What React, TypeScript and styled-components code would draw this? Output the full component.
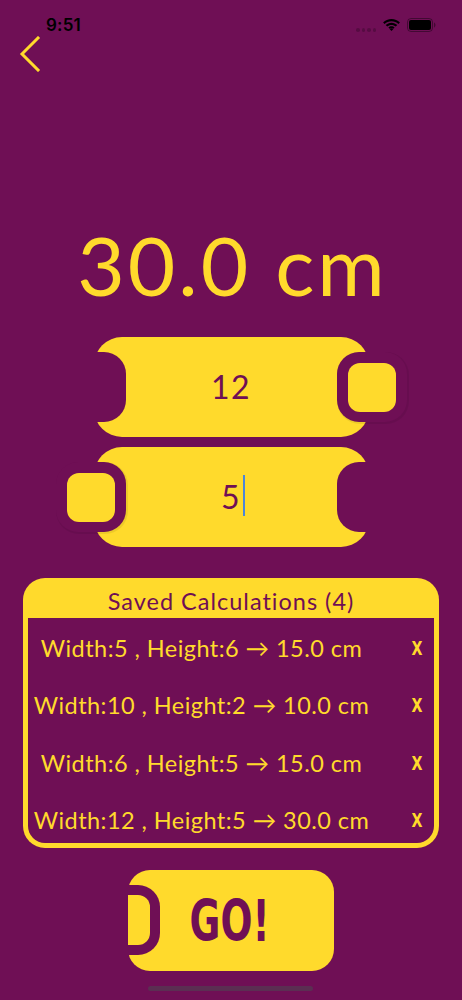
import React from "react";
import styled, { createGlobalStyle } from "styled-components";

const PURPLE = "#6f0f55";
const YELLOW = "#ffda2c";

const GlobalStyle = createGlobalStyle`
  html, body {
    margin: 0;
    padding: 0;
    background: ${PURPLE};
  }
  body {
    font-family: "Lato", "Open Sans", sans-serif;
  }
`;

const Screen = styled.div`
  position: relative;
  width: 462px;
  height: 1000px;
  overflow: hidden;
  background: ${PURPLE};
  display: flex;
  flex-direction: column;
  align-items: center;
`;

const StatusBar = styled.div`
  align-self: stretch;
  height: 37px;
  box-sizing: border-box;
  padding: 14px 26px 0 46px;
  display: flex;
  align-items: flex-start;
  justify-content: space-between;
`;

const Clock = styled.span`
  font-family: "Inter", "Roboto", sans-serif;
  font-weight: 600;
  font-size: 17px;
  line-height: 22px;
  color: #000;
  letter-spacing: 0.2px;
`;

const StatusIcons = styled.div`
  display: flex;
  align-items: center;
  gap: 6px;
  height: 22px;
`;

const Dots = styled.div`
  display: flex;
  gap: 2px;
  margin-top: 10px;
`;

const Dot = styled.span`
  width: 3.5px;
  height: 3.5px;
  border-radius: 50%;
  background: rgba(0, 0, 0, 0.22);
`;

const BackRow = styled.div`
  align-self: stretch;
  height: 33px;
  padding-left: 19px;
  display: flex;
  align-items: center;
`;

const Result = styled.div`
  margin-top: 154px;
  height: 80px;
  font-size: 82px;
  line-height: 80px;
  color: ${YELLOW};
  letter-spacing: 3px;
  margin-left: 3px;
`;

const Pill = styled.div<{ $top: number }>`
  position: relative;
  margin-top: ${(p) => p.$top}px;
  width: 275px;
  height: 100px;
  border-radius: 28px;
  background: ${YELLOW};
  display: flex;
  align-items: center;
  justify-content: center;
`;

const Notch = styled.div<{ $side: "left" | "right" }>`
  position: absolute;
  top: 15px;
  ${(p) => p.$side}: 0;
  width: 32px;
  height: 70px;
  background: ${PURPLE};
  border-radius: ${(p) => (p.$side === "left" ? "0 22px 22px 0" : "22px 0 0 22px")};
`;

const Knob = styled.div<{ $side: "left" | "right" }>`
  position: absolute;
  top: 15px;
  ${(p) => p.$side}: -38px;
  width: 70px;
  height: 70px;
  box-sizing: border-box;
  border-radius: 22px;
  background: ${PURPLE};
  box-shadow: 1px 1px 0 1px rgba(0, 0, 0, 0.07);
  display: flex;
  align-items: center;
  justify-content: center;
`;

const KnobFace = styled.div`
  width: 48px;
  height: 49px;
  border-radius: 12px;
  background: ${YELLOW};
`;

const FieldValue = styled.span`
  position: relative;
  font-size: 32px;
  line-height: 40px;
  color: ${PURPLE};
  letter-spacing: 1.5px;
`;

const Caret = styled.span`
  position: absolute;
  right: -4px;
  top: -2px;
  width: 2px;
  height: 41px;
  background: #4d86d9;
`;

const Saved = styled.div`
  margin-top: 31px;
  width: 416px;
  height: 270px;
  box-sizing: border-box;
  border-radius: 22px;
  background: ${YELLOW};
  padding: 0 5px 5px;
  display: flex;
  flex-direction: column;
`;

const SavedTitle = styled.div`
  height: 40px;
  padding-top: 6px;
  box-sizing: border-box;
  display: flex;
  align-items: center;
  justify-content: center;
  font-size: 23.5px;
  color: ${PURPLE};
  letter-spacing: 1px;
`;

const SavedList = styled.div`
  flex: 1;
  min-height: 0;
  background: ${PURPLE};
  border-radius: 0 0 17px 17px;
  padding-top: 1px;
  display: flex;
  flex-direction: column;
`;

const Row = styled.div`
  flex: none;
  height: 57.5px;
  display: flex;
  align-items: center;
  padding-right: 5px;
`;

const RowLabel = styled.span`
  flex: 1;
  text-align: center;
  font-size: 23.5px;
  color: ${YELLOW};
  letter-spacing: 0.45px;
  white-space: nowrap;
`;

const Remove = styled.span`
  width: 24px;
  margin-left: 30px;
  text-align: center;
  font-family: "DejaVu Sans", sans-serif;
  font-weight: 800;
  font-size: 19px;
  color: ${YELLOW};
  transform: scaleX(0.75);
`;

const GoButton = styled.div`
  position: relative;
  margin-top: 22px;
  width: 206px;
  height: 101px;
  border-radius: 22px;
  background: ${YELLOW};
  display: flex;
  align-items: center;
  justify-content: center;
`;

const GoNotch = styled.div`
  position: absolute;
  left: 0;
  top: 15px;
  width: 32px;
  height: 70px;
  box-sizing: border-box;
  border: 10px solid ${PURPLE};
  border-left: none;
  border-radius: 0 22px 22px 0;
  background: ${YELLOW};
`;

const GoLabel = styled.span`
  display: inline-block;
  font-family: "DejaVu Sans", sans-serif;
  font-weight: 800;
  font-size: 57px;
  line-height: 60px;
  color: ${PURPLE};
  transform: scaleX(0.66);
  margin-left: -2px;
`;

const HomeIndicator = styled.div`
  position: absolute;
  bottom: 9px;
  left: 148px;
  width: 165px;
  height: 5px;
  border-radius: 3px;
  background: #5b2e52;
`;

const saved = [
  { w: 5, h: 6, r: "15.0" },
  { w: 10, h: 2, r: "10.0" },
  { w: 6, h: 5, r: "15.0" },
  { w: 12, h: 5, r: "30.0" },
];

const Wifi = () => (
  <svg width="19" height="13" viewBox="0 0 19 13" style={{ marginTop: 1 }}>
    <path d="M9.5 2.2c2.7 0 5.1 1 6.9 2.7l1.5-1.5C15.7 1.3 12.8 0 9.5 0S3.3 1.3 1.1 3.4l1.5 1.5C4.4 3.2 6.8 2.2 9.5 2.2z" fill="#000" />
    <path d="M9.5 5.9c1.7 0 3.2.6 4.3 1.7l1.5-1.5C13.8 4.6 11.8 3.7 9.5 3.7S5.2 4.6 3.7 6.1l1.5 1.5c1.1-1.1 2.6-1.7 4.3-1.7z" fill="#000" />
    <path d="M9.5 9.3c.8 0 1.4.3 1.9.8L9.5 12 7.6 10.1c.5-.5 1.1-.8 1.9-.8z" fill="#000" />
    <path d="M9.5 7.3c1.2 0 2.3.5 3.1 1.2l-1.3 1.3c-.5-.4-1.1-.7-1.8-.7s-1.3.3-1.8.7L6.4 8.5c.8-.7 1.9-1.2 3.1-1.2z" fill="#000" />
  </svg>
);

const Battery = () => (
  <svg width="29" height="14" viewBox="0 0 29 14">
    <rect x="0.5" y="0.5" width="25" height="13" rx="3.5" fill="none" stroke="rgba(0,0,0,0.4)" />
    <rect x="2" y="2" width="22" height="10" rx="2" fill="#000" />
    <path d="M27 4.5v5c.9-.3 1.5-1.3 1.5-2.5s-.6-2.2-1.5-2.5z" fill="rgba(0,0,0,0.4)" />
  </svg>
);

const BackChevron = () => (
  <svg width="22" height="36" viewBox="0 0 22 36">
    <polyline points="19,2 3,18 19,34" fill="none" stroke={YELLOW} strokeWidth="3" strokeLinecap="square" />
  </svg>
);

const App: React.FC = () => {
  return (
    <>
      <GlobalStyle />
      <Screen>
        <StatusBar>
          <Clock>9:51</Clock>
          <StatusIcons>
            <Dots>
              <Dot />
              <Dot />
              <Dot />
              <Dot />
            </Dots>
            <Wifi />
            <Battery />
          </StatusIcons>
        </StatusBar>

        <BackRow>
          <BackChevron />
        </BackRow>

        <Result>30.0 cm</Result>

        <Pill $top={33}>
          <Notch $side="left" />
          <FieldValue>12</FieldValue>
          <Knob $side="right">
            <KnobFace />
          </Knob>
        </Pill>

        <Pill $top={10}>
          <Knob $side="left">
            <KnobFace />
          </Knob>
          <FieldValue>
            5
            <Caret />
          </FieldValue>
          <Notch $side="right" />
        </Pill>

        <Saved>
          <SavedTitle>Saved Calculations ({saved.length})</SavedTitle>
          <SavedList>
            {saved.map((s, i) => (
              <Row key={i}>
                <RowLabel>
                  Width:{s.w} , Height:{s.h} → {s.r} cm
                </RowLabel>
                <Remove>X</Remove>
              </Row>
            ))}
          </SavedList>
        </Saved>

        <GoButton>
          <GoNotch />
          <GoLabel>GO!</GoLabel>
        </GoButton>

        <HomeIndicator />
      </Screen>
    </>
  );
};

export default App;
